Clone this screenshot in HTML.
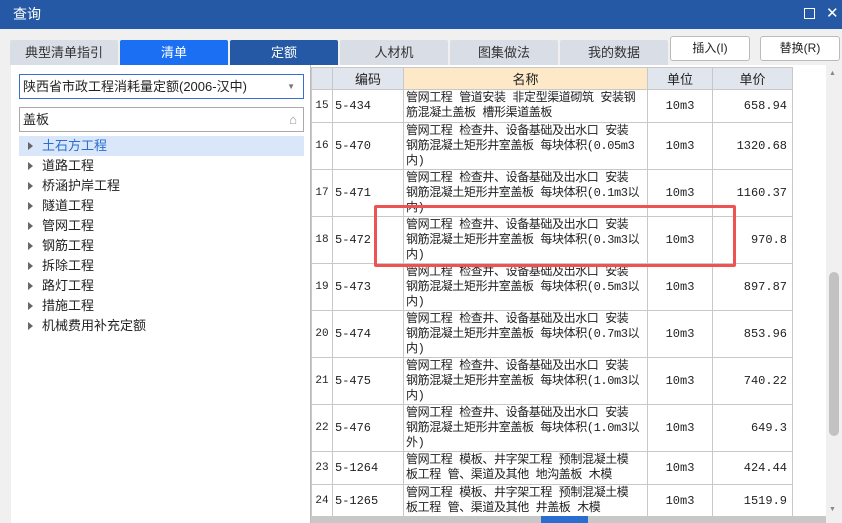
<!DOCTYPE html>
<html><head><meta charset="utf-8"><style>
*{margin:0;padding:0;box-sizing:border-box}
body{width:842px;height:523px;overflow:hidden;background:#f0f0f0;font-family:"Liberation Sans","Noto Sans CJK SC",sans-serif;font-size:13px;color:#222;position:relative}
.title{position:absolute;left:0;top:0;width:842px;height:29px;background:#2559a5;color:#fff;font-size:14px;line-height:29px;padding-left:13px}
.tab{position:absolute;top:40px;height:25px;width:108px;text-align:center;line-height:25px;font-size:13px;background:#d8dde6;color:#333;border-radius:2px 2px 0 0}
.btn{position:absolute;top:36px;height:25px;width:80px;border:1px solid #bbb;background:#fff;border-radius:3px;text-align:center;line-height:23px;font-size:12px}
.left{position:absolute;left:11px;top:65px;width:299px;height:458px;background:#fff}
.inp{position:absolute;left:8px;width:285px;height:25px;border:1px solid #aaa;line-height:23px;padding-left:3px;font-size:13px}
.tree{position:absolute;left:8px;width:285px;height:20px;line-height:20px;padding-left:23px;font-size:13px}
.tree:before{content:"";position:absolute;left:9px;top:6px;border-left:5px solid #666;border-top:4px solid transparent;border-bottom:4px solid transparent}
table{position:absolute;left:311px;top:67px;border-collapse:collapse;table-layout:fixed;background:#fff;font-family:"Liberation Mono","Noto Sans CJK SC",monospace;font-size:12px}
td{border:1px solid #c8c8c8;line-height:15px;vertical-align:middle;overflow:hidden}
th{border:1px solid #c8c8c8;background:#e1e6ee;font-weight:normal;height:22px;font-family:"Liberation Sans","Noto Sans CJK SC",sans-serif;font-size:13px}
td.n{text-align:center;background:#fff;font-size:11px}
td.c{padding-left:2px}
td.m{padding-left:2px;white-space:nowrap;letter-spacing:-0.4px}
td.u{text-align:center}
td.p{text-align:right;padding-right:5px}
</style></head><body>
<div class="title">查询</div>
<div style="position:absolute;left:804px;top:8px;width:11px;height:11px;border:1.5px solid #fff"></div>
<div style="position:absolute;left:826px;top:4px;color:#fff;font-size:15px">✕</div>
<div class="tab" style="left:10px">典型清单指引</div>
<div class="tab" style="left:120px;background:#1a6ff2;color:#fff">清单</div>
<div class="tab" style="left:230px;background:#2559a5;color:#fff">定额</div>
<div class="tab" style="left:340px">人材机</div>
<div class="tab" style="left:450px">图集做法</div>
<div class="tab" style="left:560px">我的数据</div>
<div class="btn" style="left:670px">插入(I)</div>
<div class="btn" style="left:760px">替换(R)</div>
<div class="left">
<div class="inp" style="top:9px;border-color:#3a6fd0">陕西省市政工程消耗量定额(2006-汉中)<span style="position:absolute;right:8px;top:0;font-size:8px;color:#777">▼</span></div>
<div class="inp" style="top:42px">盖板<span style="position:absolute;right:6px;top:0;color:#999">⌂</span></div>
<div class="tree" style="top:71px;background:#dae6fa;color:#2a6fd0">土石方工程</div>
<div class="tree" style="top:91px">道路工程</div>
<div class="tree" style="top:111px">桥涵护岸工程</div>
<div class="tree" style="top:131px">隧道工程</div>
<div class="tree" style="top:151px">管网工程</div>
<div class="tree" style="top:171px">钢筋工程</div>
<div class="tree" style="top:191px">拆除工程</div>
<div class="tree" style="top:211px">路灯工程</div>
<div class="tree" style="top:231px">措施工程</div>
<div class="tree" style="top:251px">机械费用补充定额</div>
</div>
<div style="position:absolute;left:310px;top:65px;width:517px;height:458px;background:#fff;border-left:1px solid #bbb"></div>
<table>
<colgroup><col style="width:21px"><col style="width:71px"><col style="width:244px"><col style="width:65px"><col style="width:80px"></colgroup>
<tr><th></th><th>编码</th><th style="background:#fde8c8">名称</th><th>单位</th><th>单价</th></tr>
<tr style="height:33px"><td class="n">15</td><td class="c">5-434</td><td class="m">管网工程 管道安装 非定型渠道砌筑 安装钢<br>筋混凝土盖板 槽形渠道盖板</td><td class="u">10m3</td><td class="p">658.94</td></tr>
<tr style="height:47px"><td class="n">16</td><td class="c">5-470</td><td class="m">管网工程 检查井、设备基础及出水口 安装<br>钢筋混凝土矩形井室盖板 每块体积(0.05m3<br>内)</td><td class="u">10m3</td><td class="p">1320.68</td></tr>
<tr style="height:47px"><td class="n">17</td><td class="c">5-471</td><td class="m">管网工程 检查井、设备基础及出水口 安装<br>钢筋混凝土矩形井室盖板 每块体积(0.1m3以<br>内)</td><td class="u">10m3</td><td class="p">1160.37</td></tr>
<tr style="height:47px"><td class="n">18</td><td class="c">5-472</td><td class="m">管网工程 检查井、设备基础及出水口 安装<br>钢筋混凝土矩形井室盖板 每块体积(0.3m3以<br>内)</td><td class="u">10m3</td><td class="p">970.8</td></tr>
<tr style="height:47px"><td class="n">19</td><td class="c">5-473</td><td class="m">管网工程 检查井、设备基础及出水口 安装<br>钢筋混凝土矩形井室盖板 每块体积(0.5m3以<br>内)</td><td class="u">10m3</td><td class="p">897.87</td></tr>
<tr style="height:47px"><td class="n">20</td><td class="c">5-474</td><td class="m">管网工程 检查井、设备基础及出水口 安装<br>钢筋混凝土矩形井室盖板 每块体积(0.7m3以<br>内)</td><td class="u">10m3</td><td class="p">853.96</td></tr>
<tr style="height:47px"><td class="n">21</td><td class="c">5-475</td><td class="m">管网工程 检查井、设备基础及出水口 安装<br>钢筋混凝土矩形井室盖板 每块体积(1.0m3以<br>内)</td><td class="u">10m3</td><td class="p">740.22</td></tr>
<tr style="height:47px"><td class="n">22</td><td class="c">5-476</td><td class="m">管网工程 检查井、设备基础及出水口 安装<br>钢筋混凝土矩形井室盖板 每块体积(1.0m3以<br>外)</td><td class="u">10m3</td><td class="p">649.3</td></tr>
<tr style="height:33px"><td class="n">23</td><td class="c">5-1264</td><td class="m">管网工程 模板、井字架工程 预制混凝土模<br>板工程 管、渠道及其他 地沟盖板 木模</td><td class="u">10m3</td><td class="p">424.44</td></tr>
<tr style="height:33px"><td class="n">24</td><td class="c">5-1265</td><td class="m">管网工程 模板、井字架工程 预制混凝土模<br>板工程 管、渠道及其他 井盖板 木模</td><td class="u">10m3</td><td class="p">1519.9</td></tr>
</table>
<div style="position:absolute;left:374px;top:205px;width:362px;height:62px;border:3px solid #ef5252;border-radius:2px"></div>
<div style="position:absolute;left:826px;top:65px;width:16px;height:458px;background:#f0f0f0"></div>
<div style="position:absolute;left:829px;top:272px;width:10px;height:164px;background:#c2c2c2;border-radius:5px"></div>
<div style="position:absolute;left:829px;top:70px;font-size:7px;color:#888">▲</div>
<div style="position:absolute;left:829px;top:506px;font-size:7px;color:#888">▼</div>
<div style="position:absolute;left:311px;top:516px;width:515px;height:7px;background:#c8c8c8"></div>
<div style="position:absolute;left:541px;top:516px;width:47px;height:7px;background:#2a6fd0"></div>
</body></html>
